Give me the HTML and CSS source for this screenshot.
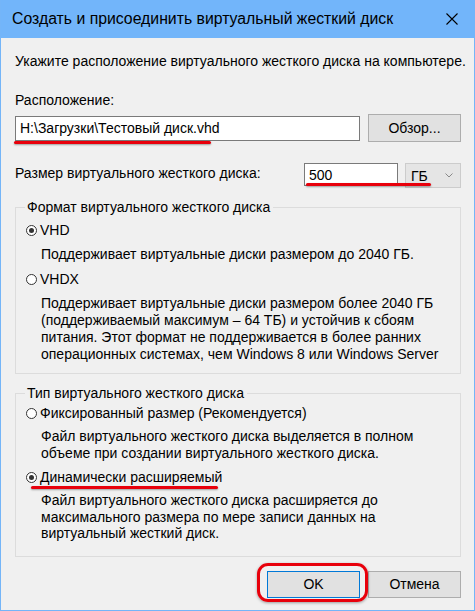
FILE: index.html
```html
<!DOCTYPE html>
<html lang="ru">
<head>
    <meta charset="UTF-8">
    <meta name="viewport" content="width=device-width, initial-scale=1.0">
    <title>Создать и присоединить виртуальный жесткий диск</title>
    <link rel="stylesheet" href="styles.css">
</head>
<body>
    <div class="window">
        <div class="titlebar">
            <span class="title">Создать и присоединить виртуальный жесткий диск</span>
            <svg class="close" width="12" height="12" viewBox="0 0 12 12">
                <path d="M0.5 0.5 L11.5 11.5 M11.5 0.5 L0.5 11.5" stroke="#000" stroke-width="1.1" fill="none"/>
            </svg>
        </div>

        <div class="content">
            <p class="intro">Укажите расположение виртуального жесткого диска на компьютере.</p>

            <div class="label">Расположение:</div>
            <div class="row location">
                <div class="textbox path">H:\Загрузки\Тестовый диск.vhd</div>
                <button class="btn browse">Обзор...</button>
            </div>

            <div class="row size">
                <span class="size-label">Размер виртуального жесткого диска:</span>
                <div class="textbox num">500</div>
                <div class="combo">
                    <span>ГБ</span>
                    <svg width="8" height="5" viewBox="0 0 8 5">
                        <path d="M0.5 0.5 L4 4 L7.5 0.5" stroke="#888" stroke-width="1" fill="none"/>
                    </svg>
                </div>
            </div>

            <fieldset class="group format">
                <legend>Формат виртуального жесткого диска</legend>
                <div class="option first"><span class="radio checked"></span>VHD</div>
                <p class="desc">Поддерживает виртуальные диски размером до 2040 ГБ.</p>
                <div class="option"><span class="radio"></span>VHDX</div>
                <p class="desc">Поддерживает виртуальные диски размером более 2040 ГБ (поддерживаемый максимум – 64 ТБ) и устойчив к сбоям питания. Этот формат не поддерживается в более ранних операционных системах, чем Windows 8 или Windows Server</p>
            </fieldset>

            <fieldset class="group type">
                <legend>Тип виртуального жесткого диска</legend>
                <div class="option first"><span class="radio"></span>Фиксированный размер (Рекомендуется)</div>
                <p class="desc">Файл виртуального жесткого диска выделяется в полном объеме при создании виртуального жесткого диска.</p>
                <div class="option"><span class="radio checked"></span>Динамически расширяемый</div>
                <p class="desc">Файл виртуального жесткого диска расширяется до максимального размера по мере записи данных на виртуальный жесткий диск.</p>
            </fieldset>

            <div class="buttons">
                <button class="btn default">OK</button>
                <button class="btn">Отмена</button>
            </div>
        </div>

        <!-- пометки красным поверх окна -->
        <div class="mark mark-path"></div>
        <div class="mark mark-size"></div>
        <div class="mark mark-dynamic"></div>
        <div class="ring"></div>
    </div>
</body>
</html>
```

FILE: styles.css
```css
body {
    margin: 0;
    font-family: "Liberation Sans", Arial, sans-serif;
    font-size: 14px;
    line-height: 16px;
    color: #000;
}
.window {
    position: relative;
    width: 473px;
    height: 610px;
    background: #f0f0f0;
    border: 1px solid #74b5f8;
    border-top: none;
    overflow: hidden;
}
.titlebar {
    height: 38px;
    background: #72b5fa;
    display: flex;
    align-items: center;
    justify-content: space-between;
    padding: 0 16px 0 11px;
}
.title {
    font-size: 15.8px;
}
.content {
    padding: 0 13px 0 14px;
}
.intro {
    margin: 15px 0 0 0;
    white-space: nowrap;
}
.label {
    margin-top: 23px;
}
.row {
    display: flex;
    align-items: center;
}
.location {
    margin-top: 6px;
    justify-content: space-between;
}
.textbox {
    background: #fff;
    border: 1px solid #7a7a7a;
    box-sizing: border-box;
    padding: 0 4px;
    display: flex;
    align-items: center;
}
.path {
    width: 345px;
    height: 25px;
}
.btn {
    font-family: inherit;
    font-size: 14px;
    color: #000;
    background: #e1e1e1;
    border: 1px solid #adadad;
    height: 28px;
    width: 93px;
    padding: 0;
}
.size {
    margin-top: 21px;
    align-items: flex-start;
}
.size-label {
    flex: 1;
    padding-top: 2px;
}
.num {
    width: 94px;
    height: 23px;
}
.combo {
    margin-left: 7px;
    width: 56px;
    height: 25px;
    box-sizing: border-box;
    background: #e5e5e5;
    border: 1px solid #cccccc;
    display: flex;
    align-items: center;
    justify-content: space-between;
    padding: 0 7px 0 5px;
}
.group {
    margin: 11px 0 0 0;
    border: 1px solid #dcdcdc;
    padding: 0 10px 10px 10px;
}
.group legend {
    padding: 0 3px 0 2px;
    margin-left: -1px;
}
.option {
    display: flex;
    align-items: center;
    margin-top: 8px;
}
.format .option.first {
    margin-top: 7px;
}
.type .option.first {
    margin-top: 4px;
}
.radio {
    width: 11px;
    height: 11px;
    box-sizing: border-box;
    border: 1px solid #333;
    border-radius: 50%;
    background: #fff;
    margin-right: 3px;
    position: relative;
}
.radio.checked::after {
    content: "";
    position: absolute;
    left: 2px;
    top: 2px;
    width: 5px;
    height: 5px;
    border-radius: 50%;
    background: #333;
}
.desc {
    margin: 8px 0 0 15px;
    line-height: 17px;
}
.type {
    padding-bottom: 14px;
}
.type .desc {
    margin-top: 7px;
    line-height: 16.5px;
}
.buttons {
    display: flex;
    justify-content: flex-end;
    gap: 8px;
    margin-top: 14px;
}
.buttons .btn {
    height: 27px;
}
.btn.default {
    border: 1px solid #0078d7;
}
.mark {
    position: absolute;
    height: 3px;
    background: #e8000b;
    border-radius: 2px;
    box-shadow: 0 1px 2px rgba(0,0,0,0.35);
}
.mark-path {
    left: 13px;
    top: 141px;
    width: 197px;
}
.mark-size {
    left: 305px;
    top: 183px;
    width: 125px;
}
.mark-dynamic {
    left: 30px;
    top: 486px;
    width: 187px;
}
.ring {
    position: absolute;
    left: 256px;
    top: 563px;
    width: 105px;
    height: 33px;
    border: 3px solid #e8000b;
    border-radius: 11px;
    box-shadow: 0 1px 3px rgba(0,0,0,0.35);
}
```
